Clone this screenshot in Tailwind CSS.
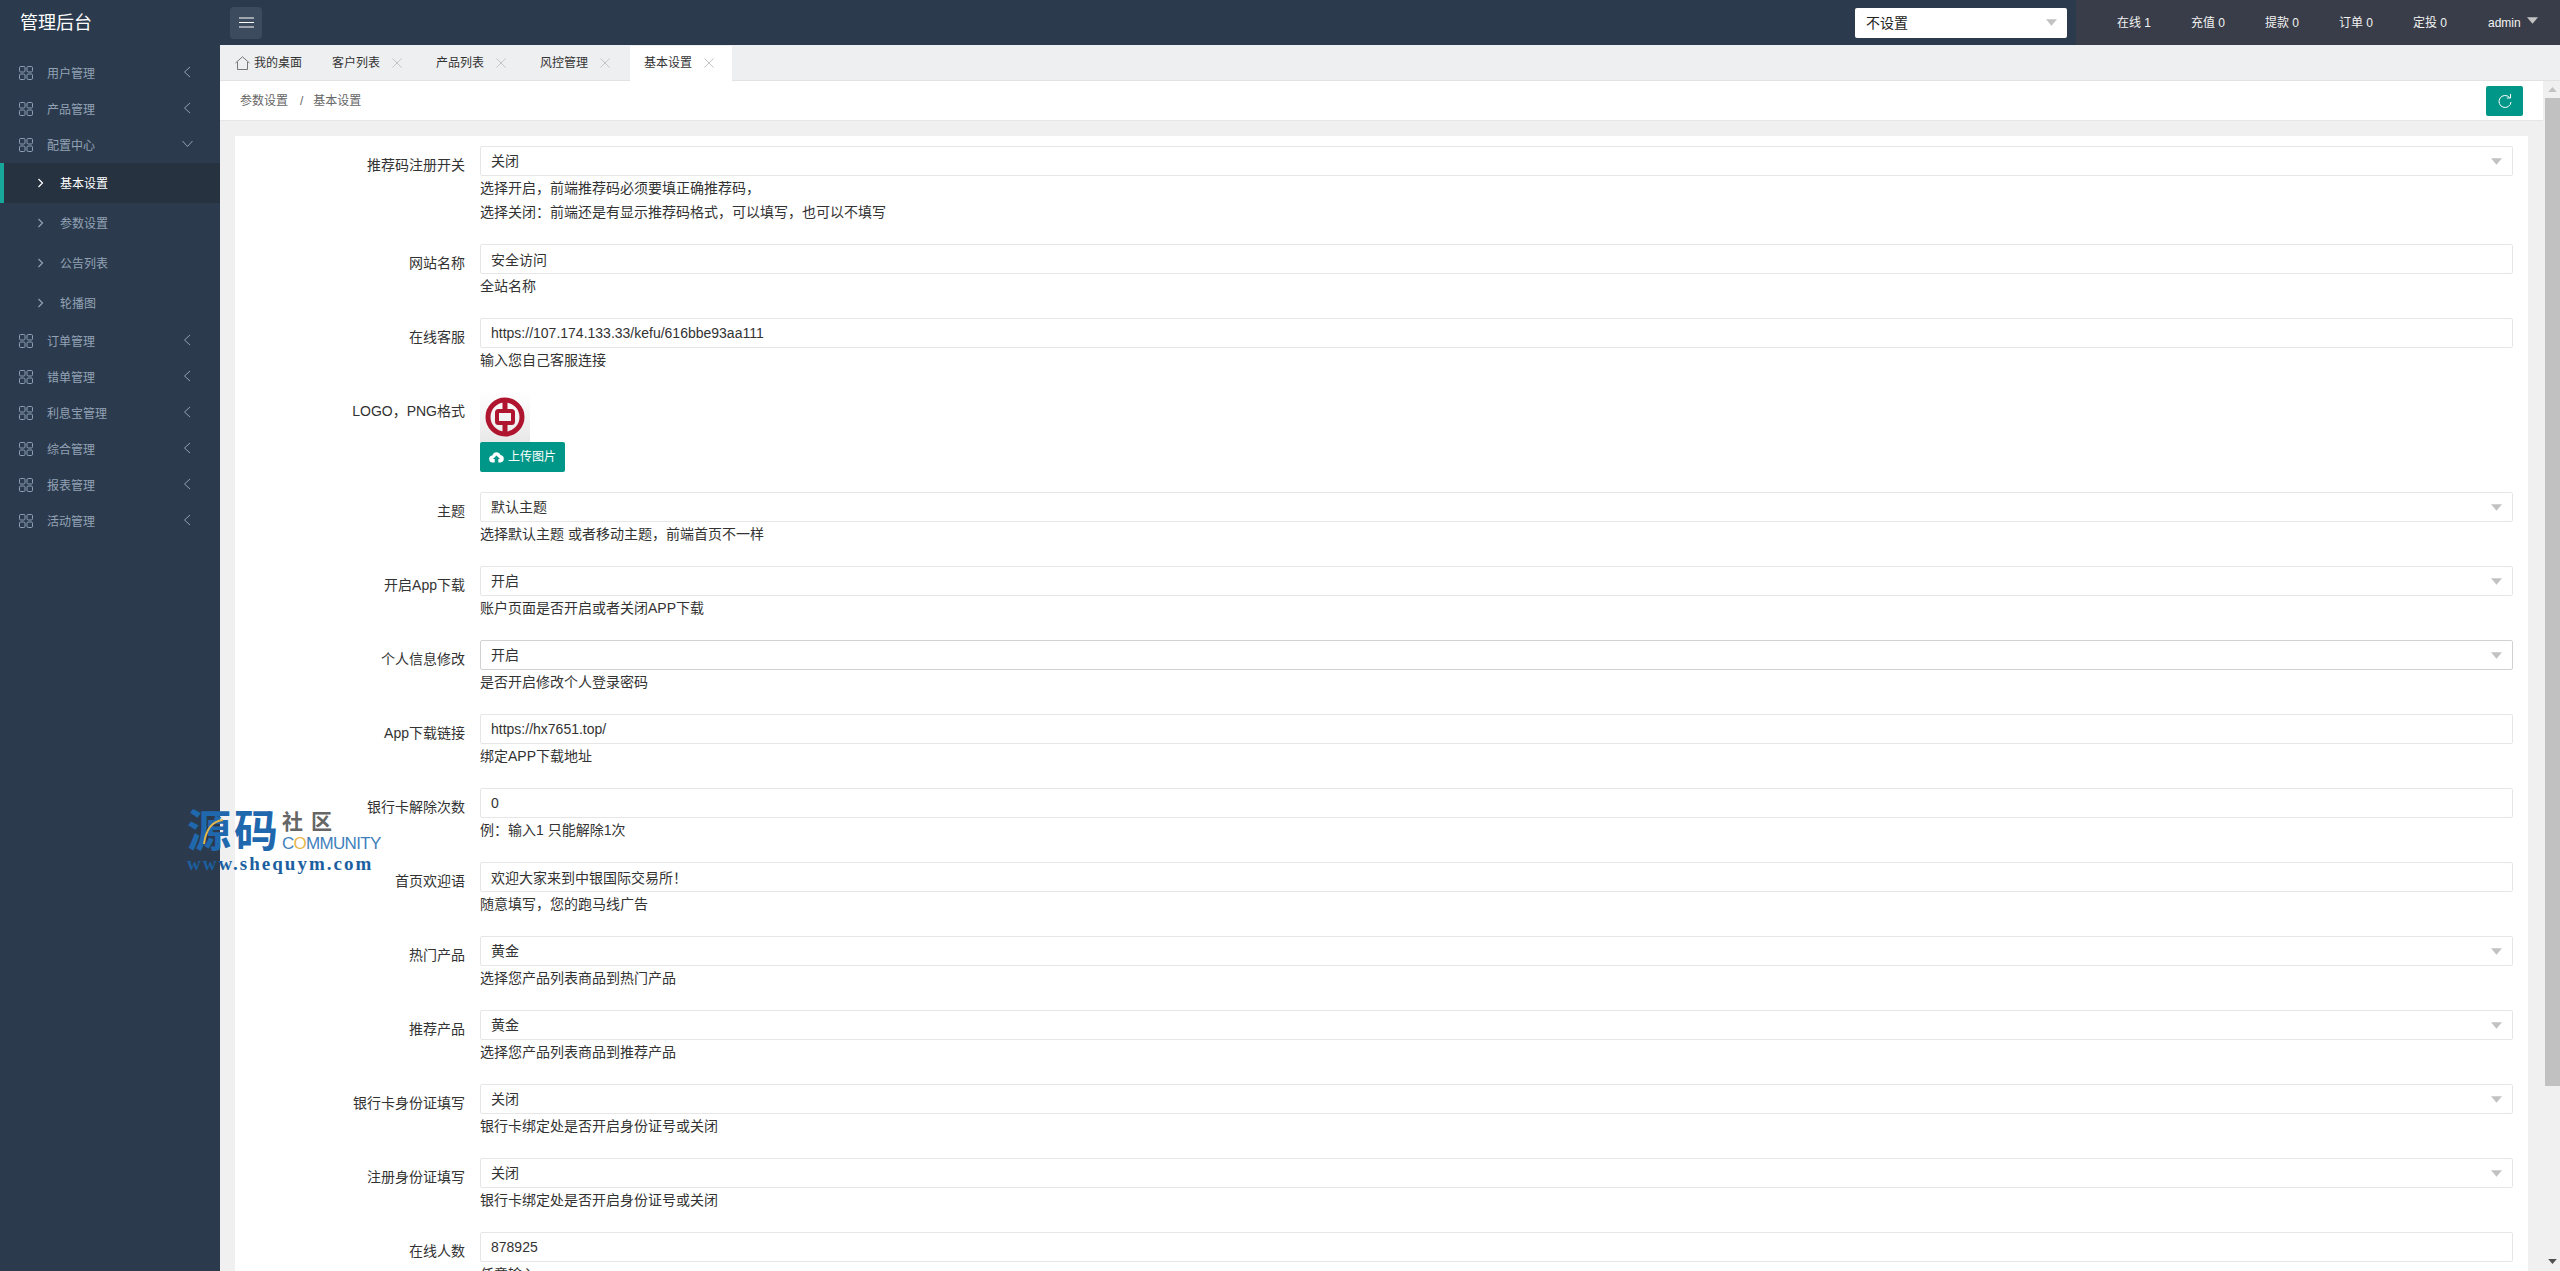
<!DOCTYPE html>
<html lang="zh-CN">
  <head>
    <meta charset="UTF-8" />
    <title>管理后台</title>
    <script src="https://cdn.jsdelivr.net/npm/@tailwindcss/browser@4"></script>
  </head>
  <body class="h-screen overflow-hidden bg-[#f0f0f0] text-[#333] font-['Liberation_Sans','Noto_Sans_CJK_SC',sans-serif]">
    <svg class="hidden">
      <symbol id="grid" viewBox="0 0 14 14"><g fill="none" stroke="currentColor" stroke-width="1"><rect x="0.5" y="0.5" width="5.5" height="5.5" rx="1.200"/><rect x="8" y="0.5" width="5.5" height="5.5" rx="1.200"/><rect x="0.5" y="8" width="5.5" height="5.5" rx="1.200"/><rect x="8" y="8" width="5.5" height="5.5" rx="1.200"/></g></symbol>
      <symbol id="left" viewBox="0 0 8 12"><path d="M7 1 1.500 6 7 11" fill="none" stroke="currentColor" stroke-width="1"/></symbol>
      <symbol id="right" viewBox="0 0 7 10"><path d="M1.500 1 5.500 5 1.500 9" fill="none" stroke="currentColor" stroke-width="1.200"/></symbol>
      <symbol id="close" viewBox="0 0 10 10"><path d="M.5.5 9.500 9.500M9.500.5.5 9.500" stroke="#c4c4c4" stroke-width="1"/></symbol>
      <symbol id="caret" viewBox="0 0 12 7"><path d="M0 0h12L6 7z" fill="#c2c2c2"/></symbol>
    </svg>

    <!-- top bar -->
    <header class="h-[45px] flex items-center bg-[#2b3b4d]">
      <div class="w-[220px] pl-5 text-lg text-white">管理后台</div>
      <button class="ml-[10px] w-8 h-8 rounded-sm bg-[#3d4b5e] flex items-center justify-center">
        <svg width="15" height="11" viewBox="0 0 15 11"><path d="M0 1h15M0 5.500h15M0 10h15" stroke="#fff" stroke-width="1.200"/></svg>
      </button>
      <div class="ml-[1593px] w-[212px] h-[30px] bg-white rounded-[2px] flex items-center justify-between pl-[11px] pr-[10px] text-sm text-[#222]">
        <span>不设置</span>
        <svg class="w-[11px] h-[7px]"><use href="#caret"/></svg>
      </div>
      <div class="ml-[9px] flex-1 h-full bg-[#393d49] pl-[41px] flex items-center text-xs text-[#f2f2f2]">
        <span class="w-[74px]">在线 1</span>
        <span class="w-[74px]">充值 0</span>
        <span class="w-[74px]">提款 0</span>
        <span class="w-[74px]">订单 0</span>
        <span class="w-[75px]">定投 0</span>
        <span>admin</span>
        <svg class="ml-[6px] w-[11px] h-[7px] -mt-1"><use href="#caret"/></svg>
      </div>
    </header>

    <div class="flex h-[1226px]">
      <!-- sidebar -->
      <aside class="w-[220px] shrink-0 bg-[#2b3b4d] pt-[10px] text-xs text-[#93a2b5]">
        <a class="h-9 flex items-center pl-[19px] pr-[29px]"><svg class="w-[14px] h-[14px] text-[#8fa1b8]"><use href="#grid"/></svg><span class="ml-[14px] pt-[2px] flex-1">用户管理</span><svg class="w-2 h-3 -mt-[2px]"><use href="#left"/></svg></a>
        <a class="h-9 flex items-center pl-[19px] pr-[29px]"><svg class="w-[14px] h-[14px] text-[#8fa1b8]"><use href="#grid"/></svg><span class="ml-[14px] pt-[2px] flex-1">产品管理</span><svg class="w-2 h-3 -mt-[2px]"><use href="#left"/></svg></a>
        <a class="h-9 flex items-center pl-[19px] pr-[27px]"><svg class="w-[14px] h-[14px] text-[#8fa1b8]"><use href="#grid"/></svg><span class="ml-[14px] pt-[2px] flex-1">配置中心</span><svg class="-mt-[2px]" width="11" height="8" viewBox="0 0 11 8"><path d="M.5 1 5.500 6.500 10.500 1" fill="none" stroke="currentColor"/></svg></a>
        <a class="h-10 flex items-center pl-[33px] bg-[#263240] border-l-4 border-[#17a79b] text-white"><svg class="w-[7px] h-[10px]"><use href="#right"/></svg><span class="ml-[16px] pt-[1px]">基本设置</span></a>
        <a class="h-10 flex items-center pl-[37px]"><svg class="w-[7px] h-[10px]"><use href="#right"/></svg><span class="ml-[16px] pt-[1px]">参数设置</span></a>
        <a class="h-10 flex items-center pl-[37px]"><svg class="w-[7px] h-[10px]"><use href="#right"/></svg><span class="ml-[16px] pt-[1px]">公告列表</span></a>
        <a class="h-10 flex items-center pl-[37px]"><svg class="w-[7px] h-[10px]"><use href="#right"/></svg><span class="ml-[16px] pt-[1px]">轮播图</span></a>
        <a class="h-9 flex items-center pl-[19px] pr-[29px]"><svg class="w-[14px] h-[14px] text-[#8fa1b8]"><use href="#grid"/></svg><span class="ml-[14px] pt-[2px] flex-1">订单管理</span><svg class="w-2 h-3 -mt-[2px]"><use href="#left"/></svg></a>
        <a class="h-9 flex items-center pl-[19px] pr-[29px]"><svg class="w-[14px] h-[14px] text-[#8fa1b8]"><use href="#grid"/></svg><span class="ml-[14px] pt-[2px] flex-1">错单管理</span><svg class="w-2 h-3 -mt-[2px]"><use href="#left"/></svg></a>
        <a class="h-9 flex items-center pl-[19px] pr-[29px]"><svg class="w-[14px] h-[14px] text-[#8fa1b8]"><use href="#grid"/></svg><span class="ml-[14px] pt-[2px] flex-1">利息宝管理</span><svg class="w-2 h-3 -mt-[2px]"><use href="#left"/></svg></a>
        <a class="h-9 flex items-center pl-[19px] pr-[29px]"><svg class="w-[14px] h-[14px] text-[#8fa1b8]"><use href="#grid"/></svg><span class="ml-[14px] pt-[2px] flex-1">综合管理</span><svg class="w-2 h-3 -mt-[2px]"><use href="#left"/></svg></a>
        <a class="h-9 flex items-center pl-[19px] pr-[29px]"><svg class="w-[14px] h-[14px] text-[#8fa1b8]"><use href="#grid"/></svg><span class="ml-[14px] pt-[2px] flex-1">报表管理</span><svg class="w-2 h-3 -mt-[2px]"><use href="#left"/></svg></a>
        <a class="h-9 flex items-center pl-[19px] pr-[29px]"><svg class="w-[14px] h-[14px] text-[#8fa1b8]"><use href="#grid"/></svg><span class="ml-[14px] pt-[2px] flex-1">活动管理</span><svg class="w-2 h-3 -mt-[2px]"><use href="#left"/></svg></a>
      </aside>

      <main class="flex-1 min-w-0 flex flex-col">
        <!-- tabs -->
        <nav class="h-9 shrink-0 bg-[#eeeff1] border-b border-[#e2e2e2] flex items-end text-xs">
          <div class="w-[98px] h-[34px] flex items-center pl-[15px]">
            <svg width="15" height="14" viewBox="0 0 15 14"><path d="M.5 7 7.500.8 14.500 7M2.500 6v7.500h10V6" fill="none" stroke="#777" stroke-width="1"/></svg>
            <span class="ml-[4px]">我的桌面</span>
          </div>
          <div class="w-[104px] h-[34px] flex items-center pl-[14px]"><span>客户列表</span><svg class="ml-3 w-[10px] h-[10px]"><use href="#close"/></svg></div>
          <div class="w-[104px] h-[34px] flex items-center pl-[14px]"><span>产品列表</span><svg class="ml-3 w-[10px] h-[10px]"><use href="#close"/></svg></div>
          <div class="w-[104px] h-[34px] flex items-center pl-[14px]"><span>风控管理</span><svg class="ml-3 w-[10px] h-[10px]"><use href="#close"/></svg></div>
          <div class="w-[102px] h-[35px] -mb-px bg-white flex items-center pl-[14px] pb-px"><span>基本设置</span><svg class="ml-3 w-[10px] h-[10px]"><use href="#close"/></svg></div>
        </nav>

        <div class="flex-1 min-h-0 flex">
          <div class="w-[2323px] shrink-0 flex flex-col">
            <!-- breadcrumb -->
            <div class="h-10 shrink-0 bg-white border-b border-[#e6e6e6] flex items-center pl-5 pr-5 text-xs text-[#666]">
              <span>参数设置</span>
              <span class="mx-[10px] pl-[2px]">/</span>
              <span>基本设置</span>
              <button class="ml-auto w-[37px] h-[30px] rounded-[2px] bg-[#009688] flex items-center justify-center">
                <svg width="14" height="16" viewBox="0 0 14 16"><path d="M11.500 4.500A6 6 0 1 0 13 9" fill="none" stroke="#fff" stroke-width="1"/><path d="M12.500 1v4H8.800" fill="none" stroke="#fff" stroke-width="1"/></svg>
              </button>
            </div>

            <!-- form -->
            <div class="flex-1 min-h-0 overflow-hidden p-[15px]">
              <form class="bg-white pt-[10px] pr-[15px] text-sm">
                <div class="flex mb-5">
                  <label class="w-[245px] shrink-0 pr-[15px] pt-[9px] leading-5 text-right">推荐码注册开关</label>
                  <div class="flex-1">
                    <div class="h-[30px] border border-[#e6e6e6] rounded-[2px] pl-[10px] pr-[10px] flex items-center justify-between"><span>关闭</span><svg class="w-[11px] h-[7px]"><use href="#caret"/></svg></div>
                    <p class="leading-6">选择开启，前端推荐码必须要填正确推荐码，</p>
                    <p class="leading-6">选择关闭：前端还是有显示推荐码格式，可以填写，也可以不填写</p>
                  </div>
                </div>
                <div class="flex mb-5">
                  <label class="w-[245px] shrink-0 pr-[15px] pt-[9px] leading-5 text-right">网站名称</label>
                  <div class="flex-1">
                    <div class="h-[30px] border border-[#e6e6e6] rounded-[2px] pl-[10px] pt-px flex items-center">安全访问</div>
                    <p class="leading-6">全站名称</p>
                  </div>
                </div>
                <div class="flex mb-5">
                  <label class="w-[245px] shrink-0 pr-[15px] pt-[9px] leading-5 text-right">在线客服</label>
                  <div class="flex-1">
                    <div class="h-[30px] border border-[#e6e6e6] rounded-[2px] pl-[10px] flex items-center">https://107.174.133.33/kefu/616bbe93aa111</div>
                    <p class="leading-6">输入您自己客服连接</p>
                  </div>
                </div>
                <div class="flex mb-5">
                  <label class="w-[245px] shrink-0 pr-[15px] pt-[9px] leading-5 text-right">LOGO，PNG格式</label>
                  <div class="flex-1">
                    <div class="w-[50px] h-[50px] bg-gradient-to-b from-white to-[#e8e8e8] flex items-center justify-center">
                      <svg width="40" height="40" viewBox="0 0 40 40">
                        <circle cx="20" cy="20" r="17" fill="none" stroke="#b0152f" stroke-width="5"/>
                        <path d="M20 3v11M20 26v11" stroke="#b0152f" stroke-width="5"/>
                        <rect x="12" y="14" width="16" height="12" rx="1.500" fill="none" stroke="#b0152f" stroke-width="4"/>
                      </svg>
                    </div>
                    <button type="button" class="w-[85px] h-[30px] rounded-[2px] bg-[#009688] flex items-center justify-center text-xs text-white">
                      <svg class="mr-[4px]" width="15" height="12" viewBox="0 0 15 12"><path d="M4 11.500a3.500 3.500 0 0 1-.6-7A4.300 4.300 0 0 1 11.600 4a3.800 3.800 0 0 1 0 7.500H9.300V8H11L7.500 4.500 4 8h1.700v3.500z" fill="#fff"/></svg>
                      上传图片
                    </button>
                  </div>
                </div>
                <div class="flex mb-5">
                  <label class="w-[245px] shrink-0 pr-[15px] pt-[9px] leading-5 text-right">主题</label>
                  <div class="flex-1">
                    <div class="h-[30px] border border-[#e6e6e6] rounded-[2px] px-[10px] flex items-center justify-between"><span>默认主题</span><svg class="w-[11px] h-[7px]"><use href="#caret"/></svg></div>
                    <p class="leading-6">选择默认主题 或者移动主题，前端首页不一样</p>
                  </div>
                </div>
                <div class="flex mb-5">
                  <label class="w-[245px] shrink-0 pr-[15px] pt-[9px] leading-5 text-right">开启App下载</label>
                  <div class="flex-1">
                    <div class="h-[30px] border border-[#e6e6e6] rounded-[2px] px-[10px] flex items-center justify-between"><span>开启</span><svg class="w-[11px] h-[7px]"><use href="#caret"/></svg></div>
                    <p class="leading-6">账户页面是否开启或者关闭APP下载</p>
                  </div>
                </div>
                <div class="flex mb-5">
                  <label class="w-[245px] shrink-0 pr-[15px] pt-[9px] leading-5 text-right">个人信息修改</label>
                  <div class="flex-1">
                    <div class="h-[30px] border border-[#d2d2d2] rounded-[2px] px-[10px] flex items-center justify-between"><span>开启</span><svg class="w-[11px] h-[7px]"><use href="#caret"/></svg></div>
                    <p class="leading-6">是否开启修改个人登录密码</p>
                  </div>
                </div>
                <div class="flex mb-5">
                  <label class="w-[245px] shrink-0 pr-[15px] pt-[9px] leading-5 text-right">App下载链接</label>
                  <div class="flex-1">
                    <div class="h-[30px] border border-[#e6e6e6] rounded-[2px] pl-[10px] flex items-center">https://hx7651.top/</div>
                    <p class="leading-6">绑定APP下载地址</p>
                  </div>
                </div>
                <div class="flex mb-5">
                  <label class="w-[245px] shrink-0 pr-[15px] pt-[9px] leading-5 text-right">银行卡解除次数</label>
                  <div class="flex-1">
                    <div class="h-[30px] border border-[#e6e6e6] rounded-[2px] pl-[10px] flex items-center">0</div>
                    <p class="leading-6">例：输入1 只能解除1次</p>
                  </div>
                </div>
                <div class="flex mb-5">
                  <label class="w-[245px] shrink-0 pr-[15px] pt-[9px] leading-5 text-right">首页欢迎语</label>
                  <div class="flex-1">
                    <div class="h-[30px] border border-[#e6e6e6] rounded-[2px] pl-[10px] pt-px flex items-center">欢迎大家来到中银国际交易所！</div>
                    <p class="leading-6">随意填写，您的跑马线广告</p>
                  </div>
                </div>
                <div class="flex mb-5">
                  <label class="w-[245px] shrink-0 pr-[15px] pt-[9px] leading-5 text-right">热门产品</label>
                  <div class="flex-1">
                    <div class="h-[30px] border border-[#e6e6e6] rounded-[2px] px-[10px] flex items-center justify-between"><span>黄金</span><svg class="w-[11px] h-[7px]"><use href="#caret"/></svg></div>
                    <p class="leading-6">选择您产品列表商品到热门产品</p>
                  </div>
                </div>
                <div class="flex mb-5">
                  <label class="w-[245px] shrink-0 pr-[15px] pt-[9px] leading-5 text-right">推荐产品</label>
                  <div class="flex-1">
                    <div class="h-[30px] border border-[#e6e6e6] rounded-[2px] px-[10px] flex items-center justify-between"><span>黄金</span><svg class="w-[11px] h-[7px]"><use href="#caret"/></svg></div>
                    <p class="leading-6">选择您产品列表商品到推荐产品</p>
                  </div>
                </div>
                <div class="flex mb-5">
                  <label class="w-[245px] shrink-0 pr-[15px] pt-[9px] leading-5 text-right">银行卡身份证填写</label>
                  <div class="flex-1">
                    <div class="h-[30px] border border-[#e6e6e6] rounded-[2px] px-[10px] flex items-center justify-between"><span>关闭</span><svg class="w-[11px] h-[7px]"><use href="#caret"/></svg></div>
                    <p class="leading-6">银行卡绑定处是否开启身份证号或关闭</p>
                  </div>
                </div>
                <div class="flex mb-5">
                  <label class="w-[245px] shrink-0 pr-[15px] pt-[9px] leading-5 text-right">注册身份证填写</label>
                  <div class="flex-1">
                    <div class="h-[30px] border border-[#e6e6e6] rounded-[2px] px-[10px] flex items-center justify-between"><span>关闭</span><svg class="w-[11px] h-[7px]"><use href="#caret"/></svg></div>
                    <p class="leading-6">银行卡绑定处是否开启身份证号或关闭</p>
                  </div>
                </div>
                <div class="flex mb-5">
                  <label class="w-[245px] shrink-0 pr-[15px] pt-[9px] leading-5 text-right">在线人数</label>
                  <div class="flex-1">
                    <div class="h-[30px] border border-[#e6e6e6] rounded-[2px] pl-[10px] flex items-center">878925</div>
                    <p class="leading-6">任意输入</p>
                  </div>
                </div>
              </form>
            </div>
          </div>

          <!-- page scrollbar -->
          <div class="flex-1 flex flex-col items-end bg-[#f0f0f0]">
            <svg class="mr-[3px] mt-[6px] w-[9px] h-[5px] rotate-180"><use href="#caret"/></svg>
            <div class="mt-[6px] w-[15px] h-[988px] bg-[#c1c1c1]"></div>
            <svg class="mr-[3px] mt-[173px] w-[9px] h-[5px]" viewBox="0 0 12 7"><path d="M0 0h12L6 7z" fill="#505050"/></svg>
          </div>
        </div>
      </main>
    </div>

    <!-- watermark over the page -->
    <div class="absolute left-[187px] top-[806px] w-[200px] pointer-events-none">
      <div class="flex items-start">
        <div class="relative w-[94px] text-[44px] leading-[52px] font-bold text-[#1f68ae] tracking-[3px] whitespace-nowrap">
          源码
          <svg class="absolute left-[14px] top-[13px]" width="24" height="26" viewBox="0 0 24 26"><path d="M22 1C12 2 5 10 3 25" fill="none" stroke="#e3b54d" stroke-width="2"/></svg>
        </div>
        <div class="ml-[1px] pt-[5px]">
          <div class="text-[21px] leading-[22px] font-bold text-[#666] tracking-[8px] whitespace-nowrap">社区</div>
          <div class="mt-[2px] text-[17px] leading-[17px] text-[#3f7fbd] tracking-[-0.700px] whitespace-nowrap">C<span class="text-[#e8b64a]">O</span>MMUNITY</div>
        </div>
      </div>
      <div class="-mt-[4px] font-['Liberation_Serif',serif] text-[19px] leading-5 font-bold tracking-[2px] text-[#1c5fa0] whitespace-nowrap">www.shequym.com</div>
    </div>
  </body>
</html>
